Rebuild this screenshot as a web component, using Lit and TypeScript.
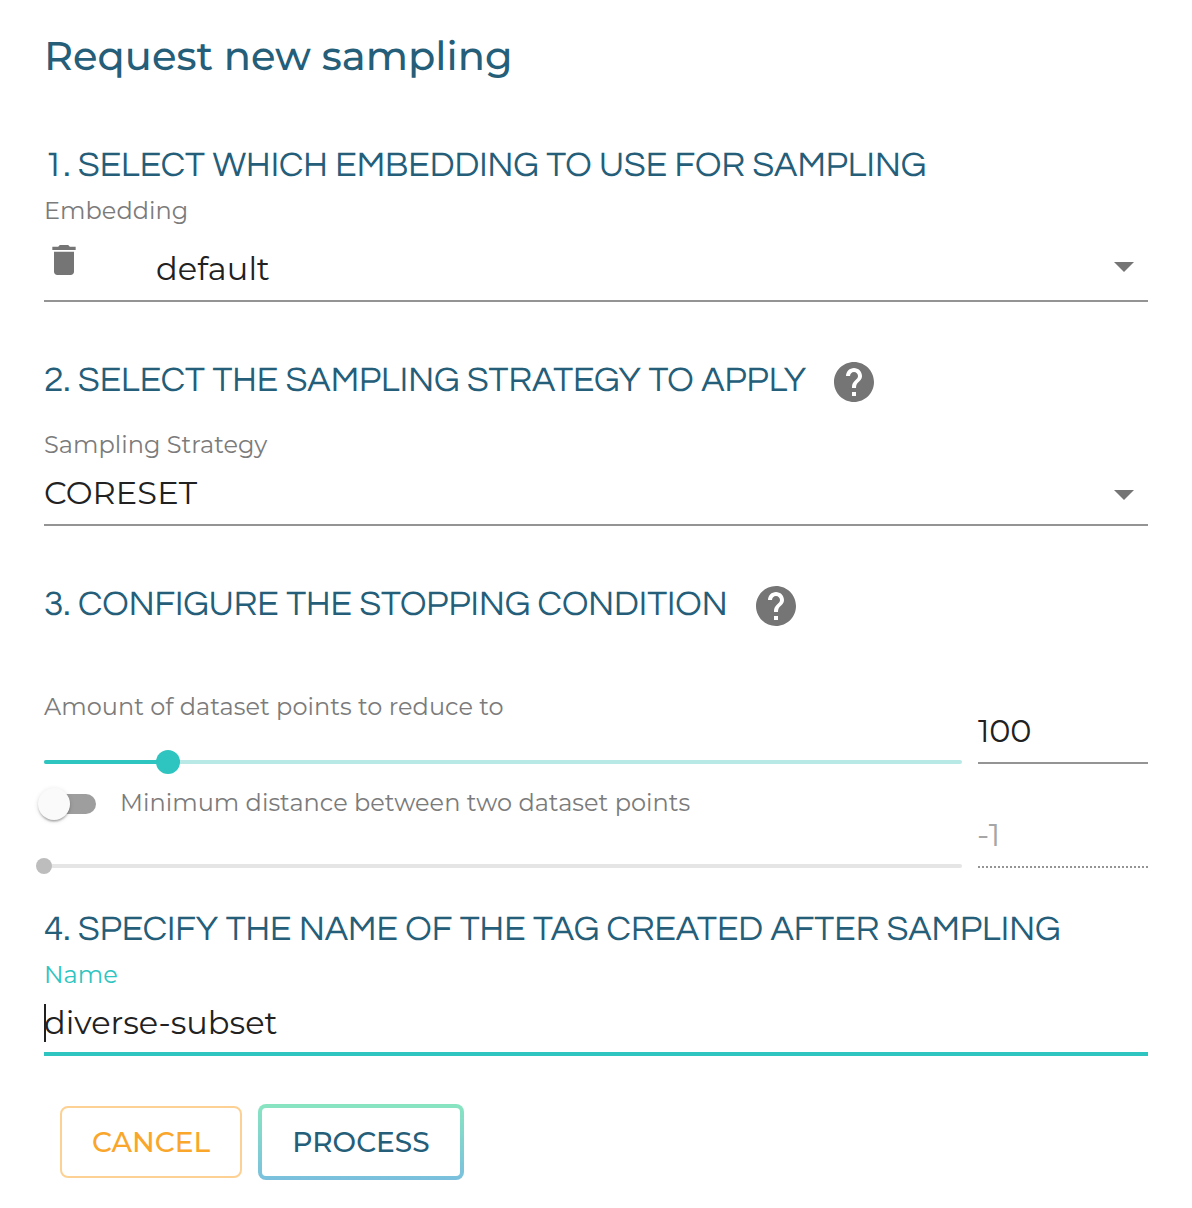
import { LitElement, html, css, svg } from "lit";
import { customElement, property } from "lit/decorators.js";
import { classMap } from "lit/directives/class-map.js";
import { styleMap } from "lit/directives/style-map.js";

@customElement("help-icon")
class HelpIcon extends LitElement {
  static styles = css`
    :host { display: block; width: 48px; height: 48px; color: #757575; }
    svg { display: block; width: 48px; height: 48px; fill: currentColor; }
  `;
  render() {
    return html`<svg viewBox="0 0 24 24">${svg`<path d="M12 2C6.48 2 2 6.48 2 12s4.48 10 10 10 10-4.48 10-10S17.52 2 12 2zm1 17h-2v-2h2v2zm2.07-7.75l-.9.92C13.45 12.9 13 13.5 13 15h-2v-.5c0-1.1.45-2.1 1.17-2.83l1.24-1.26c.37-.36.59-.86.59-1.41 0-1.1-.9-2-2-2s-2 .9-2 2H8c0-2.21 1.79-4 4-4s4 1.79 4 4c0 .88-.36 1.68-.93 2.25z"/>`}</svg>`;
  }
}

@customElement("range-slider")
class RangeSlider extends LitElement {
  @property({ type: Number }) percent = 0;
  @property({ type: Boolean }) disabled = false;

  static styles = css`
    :host { display: block; }
    .track { position: relative; height: 4px; border-radius: 2px; background: #b8e9e6; }
    .fill { height: 4px; border-radius: 2px; background: #2ec4bf; }
    .thumb {
      position: absolute; top: 2px; width: 24px; height: 24px; border-radius: 50%;
      transform: translate(-50%, -50%); background: #2ec4bf;
    }
    .off { background: #e5e5e5; }
    .off .fill { background: none; }
    .off .thumb { width: 16px; height: 16px; background: #bdbdbd; }
  `;
  render() {
    return html`<div class=${classMap({ track: true, off: this.disabled })}>
      <div class="fill" style=${styleMap({ width: `${this.percent}%` })}></div>
      <div class="thumb" style=${styleMap({ left: `${this.percent}%` })}></div>
    </div>`;
  }
}

@customElement("app-root")
class AppRoot extends LitElement {
  static styles = css`
    :host {
      display: block; box-sizing: border-box; height: 1208px; padding: 37px 44px 0;
      background: #fff; color: #212121;
      font-family: "Montserrat", "Inter", "Open Sans", sans-serif;
    }
    h1, h2 { text-rendering: geometricPrecision; }
    h1 { margin: 0; font-size: 40px; line-height: 40px; font-weight: 500; color: #255e79; }
    h2 {
      margin: 0; font-family: "Questrial", "Montserrat", "Inter", sans-serif;
      font-size: 35.2px; line-height: 40px; font-weight: 400; color: #255e79; white-space: nowrap;
    }
    .step { display: flex; flex-direction: column; }
    .embedding { margin-top: 69px; }
    .strategy { margin-top: 56px; }
    .stopping { margin-top: 56px; }
    .naming { margin-top: 42px; }
    .head { display: flex; align-items: flex-start; height: 48px; }
    .head h2 { margin-top: 3px; }
    .head help-icon { margin-left: 24px; }
    .label { font-size: 24px; line-height: 24px; letter-spacing: .025px; color: #7b7b7b; white-space: nowrap; }
    .value { font-size: 32px; line-height: 38px; }
    .choice { letter-spacing: .1px; }
    .count { letter-spacing: -.3px; }
    .field {
      display: flex; align-items: flex-start; justify-content: space-between;
      border-bottom: 2px solid #949494; box-sizing: border-box;
    }
    .embedding .label { margin-top: 13px; }
    .embedding .field { margin-top: 17px; height: 62px; }
    .picked { display: flex; align-items: flex-start; }
    .picked .value { margin: 10px 0 0 72px; }
    .trash { width: 40px; height: 40px; fill: #757575; }
    .arrow { width: 20px; height: 10px; margin: 16px 14px 0 0; fill: #757575; }
    .embedding .arrow { margin-top: 22px; }
    .strategy .label { margin-top: 27px; }
    .strategy .field { margin-top: 17px; height: 52px; }
    .row { display: grid; grid-template-columns: 918px 170px; column-gap: 16px; }
    .amount { margin-top: 64px; height: 74px; }
    .amount .label { margin-top: 1px; }
    .amount range-slider { margin-top: 41px; }
    .amount .field { margin-top: 18px; height: 52px; }
    .distance { margin-top: 16px; height: 84px; }
    .distance range-slider { margin-top: 44px; }
    .distance .field { margin-top: 32px; height: 52px; border-bottom-style: dotted; color: #a6a6a6; }
    .distance .value { margin-left: -1px; }
    .switch { display: flex; align-items: center; height: 32px; margin: 4px 0 0 -6px; }
    .switch .label { margin: -2px 0 0 24px; }
    .toggle { display: flex; align-items: center; width: 58px; height: 32px; }
    .knob {
      position: relative; z-index: 1; width: 32px; height: 32px; border-radius: 50%; background: #fafafa;
      box-shadow: 0 3px 2px -2px rgba(0,0,0,.2), 0 2px 2px rgba(0,0,0,.14), 0 1px 5px rgba(0,0,0,.12);
    }
    .rail { flex: 1; height: 20px; margin-left: -16px; border-radius: 0 10px 10px 0; background: #9e9e9e; }
    .naming .label { margin-top: 13px; color: #2ec4bf; }
    .naming .field { margin-top: 17px; height: 52px; border-bottom: 4px solid #2ec4bf; }
    .caret { width: 2px; height: 38px; margin-right: -2px; background: #212121; }
    .typed { display: flex; }
    .actions { display: flex; align-items: center; gap: 16px; margin: 48px 0 0 16px; }
    button {
      box-sizing: border-box; padding: 0; font: 500 28px/28px "Montserrat", "Inter", sans-serif; background: #fff;
    }
    .cancel { width: 182px; height: 72px; border: 2px solid #fdd193; border-radius: 8px; color: #f9a62b; }
    .process {
      width: 206px; height: 76px; border: 4px solid transparent; border-radius: 8px; color: #255e79;
      background: linear-gradient(#fff, #fff) padding-box, linear-gradient(#88e5c0, #7ac0de) border-box;
    }
  `;

  private arrow() {
    return html`<svg class="arrow" viewBox="0 0 20 10"><path d="M0 0h20L10 10z"/></svg>`;
  }

  render() {
    return html`
      <h1>Request new sampling</h1>
      <section class="step embedding">
        <h2>1. SELECT WHICH EMBEDDING TO USE FOR SAMPLING</h2>
        <div class="label">Embedding</div>
        <div class="field">
          <div class="picked">
            <svg class="trash" viewBox="0 0 24 24"><path d="M6 19c0 1.1.9 2 2 2h8c1.1 0 2-.9 2-2V7H6v12zM19 4h-3.5l-1-1h-5l-1 1H5v2h14V4z"/></svg>
            <span class="value choice">default</span>
          </div>
          ${this.arrow()}
        </div>
      </section>
      <section class="step strategy">
        <div class="head"><h2>2. SELECT THE SAMPLING STRATEGY TO APPLY</h2><help-icon></help-icon></div>
        <div class="label">Sampling Strategy</div>
        <div class="field"><span class="value choice">CORESET</span>${this.arrow()}</div>
      </section>
      <section class="step stopping">
        <div class="head"><h2>3. CONFIGURE THE STOPPING CONDITION</h2><help-icon></help-icon></div>
        <div class="row amount">
          <div><div class="label">Amount of dataset points to reduce to</div><range-slider percent="13.5"></range-slider></div>
          <div class="field"><span class="value count">100</span></div>
        </div>
        <div class="row distance">
          <div>
            <div class="switch">
              <div class="toggle"><div class="knob"></div><div class="rail"></div></div>
              <span class="label">Minimum distance between two dataset points</span>
            </div>
            <range-slider percent="0" disabled></range-slider>
          </div>
          <div class="field"><span class="value">-1</span></div>
        </div>
      </section>
      <section class="step naming">
        <h2>4. SPECIFY THE NAME OF THE TAG CREATED AFTER SAMPLING</h2>
        <div class="label">Name</div>
        <div class="field"><div class="typed"><span class="caret"></span><span class="value">diverse-subset</span></div></div>
      </section>
      <div class="actions">
        <button class="cancel">CANCEL</button>
        <button class="process">PROCESS</button>
      </div>
    `;
  }
}
